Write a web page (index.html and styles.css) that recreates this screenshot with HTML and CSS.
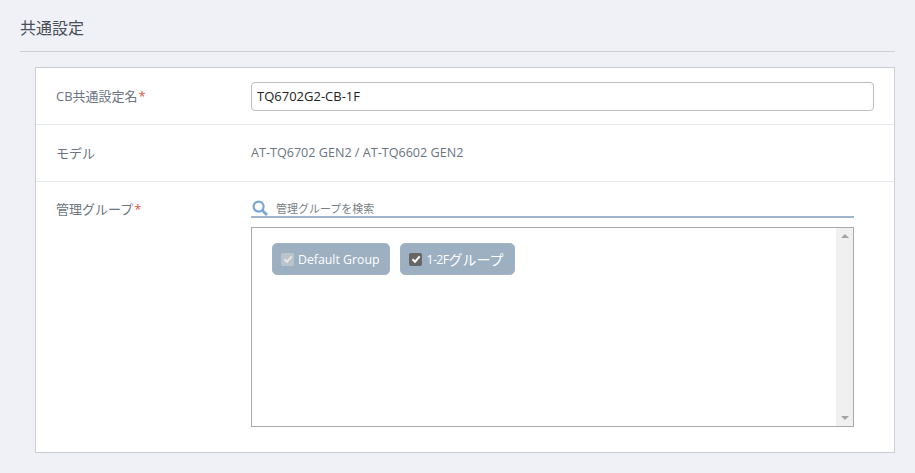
FILE: index.html
```html
<!DOCTYPE html>
<html lang="ja">
<head>
<meta charset="utf-8">
<title>共通設定</title>
<link rel="stylesheet" href="styles.css">
</head>
<body>
<h1 class="title">共通設定</h1>
<section class="card">
  <div class="row row-name">
    <div class="label">CB共通設定名<span class="req">*</span></div>
    <input class="text-input" type="text" value="TQ6702G2-CB-1F">
  </div>
  <div class="row row-model">
    <div class="label">モデル</div>
    <div class="value">AT-TQ6702 GEN2 / AT-TQ6602 GEN2</div>
  </div>
  <div class="row row-group">
    <div class="label">管理グループ<span class="req">*</span></div>
    <div class="group-col">
      <div class="search">
        <svg class="search-icon" width="16" height="16" viewBox="0 0 16 16"><circle cx="6.6" cy="6.6" r="5" fill="none" stroke="#7aa6d6" stroke-width="2.2"/><path d="M10.2 10.2L15 15" stroke="#7aa6d6" stroke-width="2.8" fill="none"/></svg>
        <span class="search-text">管理グループを検索</span>
      </div>
      <div class="list">
        <div class="chips">
          <div class="chip"><span class="box box-off"><svg width="10" height="10" viewBox="0 0 10 10"><path d="M1.5 5.2L4 7.7L8.7 2.3" fill="none" stroke="#e4e7ea" stroke-width="2"/></svg></span>Default Group</div>
          <div class="chip"><span class="box box-on"><svg width="10" height="10" viewBox="0 0 10 10"><path d="M1.5 5.2L4 7.7L8.7 2.3" fill="none" stroke="#fff" stroke-width="2"/></svg></span><span class="chip-num">1-2F</span><span class="chip-cjk">グループ</span></div>
        </div>
        <div class="scrollbar">
          <span class="arrow arrow-up"></span>
          <span class="arrow arrow-down"></span>
        </div>
      </div>
    </div>
  </div>
</section>
</body>
</html>
```
FILE: styles.css
```css
* { box-sizing: border-box; }
html, body { margin: 0; height: 100%; }
body {
  background: #eff1f6;
  font-family: "Open Sans", "Noto Sans CJK JP", sans-serif;
  font-size: 13px;
  color: #6b7480;
  padding: 0 20px 0 20px;
  overflow: hidden;
}
.title {
  margin: 0;
  height: 52px;
  padding-top: 17px;
  font-size: 16px;
  font-weight: 400;
  line-height: 22px;
  color: #4a4f57;
  border-bottom: 1px solid #cdd0d3;
}
.card {
  margin: 15px 0 0 15px;
  width: 860px;
  height: 386px;
  background: #fff;
  border: 1px solid #c9cfd2;
  display: flex;
  flex-direction: column;
}
.row {
  display: flex;
  padding: 0 20px;
  border-bottom: 1px solid #e4e6e9;
}
.row-name { height: 57px; align-items: center; }
.row-model { height: 57px; align-items: center; }
.row-group { flex: 1; border-bottom: none; padding-top: 17px; }
.label { width: 195px; flex: none; line-height: 20px; }
.req { color: #d9583f; margin-left: 1px; }
.value { line-height: 20px; font-size: 12.6px; }
.text-input {
  width: 623px;
  height: 29px;
  border: 1px solid #b9bdc1;
  border-radius: 4px;
  padding: 0 5px;
  font: inherit;
  color: #222;
  background: #fff;
  outline: none;
}
.group-col { width: 603px; }
.search {
  height: 19px;
  border-bottom: 2px solid #9db4cc;
  display: flex;
  align-items: center;
  gap: 8px;
  padding-left: 1px;
  font-size: 11px;
  line-height: 17px;
}
.search-icon { flex: none; }
.search-text { color: #7a7f85; position: relative; top: 1px; }
.list {
  margin-top: 9px;
  height: 200px;
  border: 1px solid #a9a9a9;
  display: flex;
  justify-content: space-between;
}
.chips { display: flex; align-items: flex-start; gap: 10px; padding: 15px 20px; }
.chip {
  height: 32px;
  background: #9cb0c1;
  border: 1px solid #a3b3c0;
  border-radius: 5px;
  color: #fff;
  font-size: 12.3px;
  display: flex;
  align-items: center;
  padding: 0 10px 0 8px;
  white-space: nowrap;
}
.chip-num { letter-spacing: -0.6px; }
.chip-cjk { font-size: 14px; }
.box {
  width: 13px;
  height: 13px;
  border-radius: 2px;
  margin-right: 4px;
  display: flex;
  align-items: center;
  justify-content: center;
}
.box-off { background: #bcc4cb; }
.box-on { background: #666; }
.scrollbar {
  width: 17px;
  background: #f0f0f0;
  display: flex;
  flex-direction: column;
  justify-content: space-between;
  align-items: center;
  padding: 6px 0;
}
.arrow { width: 0; height: 0; border-left: 4px solid transparent; border-right: 4px solid transparent; }
.arrow-up { border-bottom: 4px solid #a3a3a3; }
.arrow-down { border-top: 4px solid #a3a3a3; }
```
